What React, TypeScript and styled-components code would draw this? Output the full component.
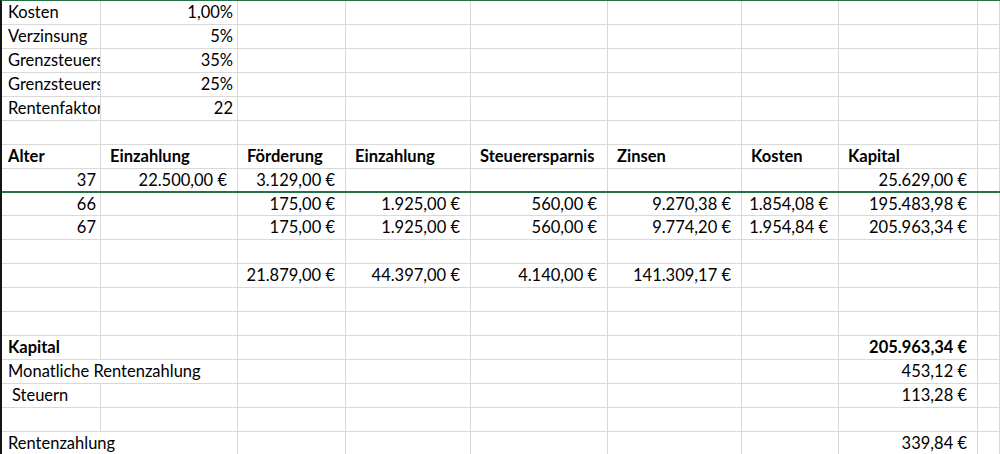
import React from "react";
import styled, { createGlobalStyle, css } from "styled-components";

const GlobalStyle = createGlobalStyle`
  html, body {
    margin: 0;
    padding: 0;
    background: #ffffff;
    overflow: hidden;
  }
  body {
    font-family: "Lato", "Liberation Sans", sans-serif;
    color: #000;
  }
`;

const COLS = "99px 137px 108px 125px 137px 134px 97px 139px 1fr";

const Sheet = styled.div`
  width: 1000px;
  height: 454px;
  box-sizing: border-box;
  border-top: 1px solid #217346;
  border-left: 2px solid #141414;
  overflow: hidden;
`;

const Row = styled.div<{ $h?: number; $frozen?: boolean }>`
  display: grid;
  grid-template-columns: ${COLS};
  height: ${(p) => p.$h ?? 24}px;
  box-sizing: border-box;
  border-bottom: ${(p) => (p.$frozen ? "2px solid #217346" : "1px solid #d9d9d9")};
`;

const Cell = styled.div<{
  $right?: boolean;
  $bold?: boolean;
  $spill?: boolean;
  $indent?: number;
  $pad?: number;
}>`
  box-sizing: border-box;
  border-right: 1px solid #d9d9d9;
  font-size: 16.5px;
  line-height: 23px;
  padding-top: 0px;
  white-space: nowrap;
  overflow: hidden;
  font-weight: ${(p) => (p.$bold ? 700 : 400)};
  text-align: ${(p) => (p.$right ? "right" : "left")};
  padding-left: ${(p) => (p.$right ? 0 : 6 + (p.$indent ?? 0))}px;
  padding-right: ${(p) => (p.$right ? p.$pad ?? 4 : 0)}px;
  ${(p) =>
    p.$spill &&
    css`
      overflow: visible;
      border-right-color: transparent;
      position: relative;
      z-index: 1;
    `}
`;

type C = {
  t?: string;
  r?: boolean;
  b?: boolean;
  s?: boolean;
  i?: number;
  p?: number;
};

const E: C = {};
const eur = (t: string, b?: boolean): C => ({ t, r: true, p: 10, b });
const num = (t: string): C => ({ t, r: true, p: 4 });
const hd = (t: string, first?: boolean): C => ({ t, b: true, i: first ? 0 : 3 });

const rows: { cells: C[]; h?: number; frozen?: boolean }[] = [
  { cells: [{ t: "Kosten" }, num("1,00%")] },
  { cells: [{ t: "Verzinsung" }, num("5%")] },
  { cells: [{ t: "Grenzsteuersatz" }, num("35%")] },
  { cells: [{ t: "Grenzsteuersatz" }, num("25%")] },
  { cells: [{ t: "Rentenfaktor" }, num("22")] },
  { cells: [] },
  {
    cells: [
      hd("Alter", true),
      hd("Einzahlung"),
      hd("Förderung"),
      hd("Einzahlung"),
      hd("Steuerersparnis"),
      hd("Zinsen"),
      hd("Kosten"),
      hd("Kapital"),
    ],
  },
  {
    frozen: true,
    cells: [num("37"), eur("22.500,00 €"), eur("3.129,00 €"), E, E, E, E, eur("25.629,00 €")],
  },
  {
    h: 23,
    cells: [
      num("66"),
      E,
      eur("175,00 €"),
      eur("1.925,00 €"),
      eur("560,00 €"),
      eur("9.270,38 €"),
      eur("1.854,08 €"),
      eur("195.483,98 €"),
    ],
  },
  {
    cells: [
      num("67"),
      E,
      eur("175,00 €"),
      eur("1.925,00 €"),
      eur("560,00 €"),
      eur("9.774,20 €"),
      eur("1.954,84 €"),
      eur("205.963,34 €"),
    ],
  },
  { cells: [] },
  {
    cells: [E, E, eur("21.879,00 €"), eur("44.397,00 €"), eur("4.140,00 €"), eur("141.309,17 €"), E, E],
  },
  { cells: [] },
  { cells: [] },
  { cells: [{ t: "Kapital", b: true }, E, E, E, E, E, E, eur("205.963,34 €", true)] },
  { cells: [{ t: "Monatliche Rentenzahlung", s: true }, E, E, E, E, E, E, eur("453,12 €")] },
  { cells: [{ t: "Steuern", i: 4 }, E, E, E, E, E, E, eur("113,28 €")] },
  { cells: [] },
  { cells: [{ t: "Rentenzahlung", s: true }, E, E, E, E, E, E, eur("339,84 €")] },
];

export default function App() {
  return (
    <>
      <GlobalStyle />
      <Sheet>
        {rows.map((row, ri) => {
          const cells = Array.from({ length: 9 }, (_, ci) => row.cells[ci] ?? E);
          return (
            <Row key={ri} $h={row.h} $frozen={row.frozen}>
              {cells.map((c, ci) => (
                <Cell
                  key={ci}
                  $right={c.r}
                  $bold={c.b}
                  $spill={c.s}
                  $indent={c.i}
                  $pad={c.p}
                >
                  {c.t ?? ""}
                </Cell>
              ))}
            </Row>
          );
        })}
      </Sheet>
    </>
  );
}
